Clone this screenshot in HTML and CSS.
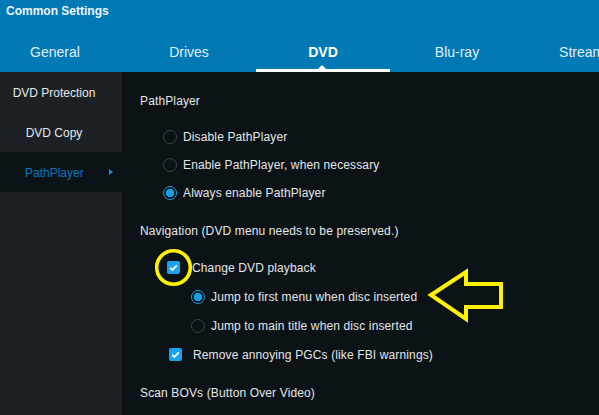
FILE: index.html
```html
<!DOCTYPE html>
<html>
<head>
<meta charset="utf-8">
<link rel="stylesheet" href="styles.css">
</head>
<body>
<div class="app">
  <header class="header">
    <div class="title">Common Settings</div>
    <nav class="tabs">
      <div class="tab">General</div>
      <div class="tab">Drives</div>
      <div class="tab active">DVD</div>
      <div class="tab">Blu-ray</div>
      <div class="tab">Streaming</div>
    </nav>
  </header>
  <div class="body">
    <aside class="sidebar">
      <div class="side-item">DVD Protection</div>
      <div class="side-item">DVD Copy</div>
      <div class="side-item active">PathPlayer<span class="side-arrow"></span></div>
    </aside>
    <main class="content">
      <div class="heading">PathPlayer</div>
      <div class="group">
        <div class="row radio-row"><span class="radio"></span>Disable PathPlayer</div>
        <div class="row radio-row"><span class="radio"></span>Enable PathPlayer, when necessary</div>
        <div class="row radio-row"><span class="radio on"></span>Always enable PathPlayer</div>
      </div>
      <div class="heading">Navigation (DVD menu needs to be preserved.)</div>
      <div class="group">
        <div class="row nrow check-row"><span class="check"><svg width="13" height="13" viewBox="0 0 13 13"><path d="M3.2 6.8 L5.4 9 L9.8 4.3" fill="none" stroke="#fff" stroke-width="1.8"/></svg></span>Change DVD playback</div>
        <div class="row nrow sub-row"><span class="radio on"></span>Jump to first menu when disc inserted</div>
        <div class="row nrow sub-row"><span class="radio"></span>Jump to main title when disc inserted</div>
        <div class="row nrow check-row2"><span class="check"><svg width="13" height="13" viewBox="0 0 13 13"><path d="M3.2 6.8 L5.4 9 L9.8 4.3" fill="none" stroke="#fff" stroke-width="1.8"/></svg></span>Remove annoying PGCs (like FBI warnings)</div>
      </div>
      <div class="heading">Scan BOVs (Button Over Video)</div>
    </main>
  </div>
  <svg class="annot" width="599" height="415" viewBox="0 0 599 415">
    <circle cx="173.5" cy="267.5" r="16.8" fill="none" stroke="#fff200" stroke-width="3.6"/>
    <polygon points="431,295 466,272 466,284 501,284 501,307 466,307 466,319" fill="none" stroke="#fff200" stroke-width="4" stroke-linejoin="miter"/>
  </svg>
</div>
</body>
</html>
```
FILE: styles.css
```css
* { box-sizing: border-box; }
html, body { margin: 0; padding: 0; }
body {
  width: 599px;
  height: 415px;
  overflow: hidden;
  background: #0b1317;
  font-family: "Liberation Sans", Arial, sans-serif;
  font-size: 12px;
  color: #e4e6e8;
}
.app { position: relative; width: 599px; height: 415px; display: flex; flex-direction: column; }
.header {
  background: #0079b5;
  height: 72px;
  display: flex;
  flex-direction: column;
  overflow: hidden;
}
.title {
  font-weight: bold;
  font-size: 12px;
  color: #f2f6fa;
  padding: 4px 0 0 6px;
  height: 30px;
}
.tabs {
  display: flex;
  margin-left: -12px;
  height: 42px;
  white-space: nowrap;
}
.tab {
  flex: 0 0 134px;
  text-align: center;
  font-size: 14px;
  color: #e2eef6;
  padding-top: 14px;
  position: relative;
}
.tab.active {
  font-weight: bold;
  color: #fff;
}
.tab.active::after {
  content: "";
  position: absolute;
  left: 0; right: 0; bottom: 0;
  height: 3px;
  background: #fff;
}
.tab.active::before {
  content: "";
  position: absolute;
  left: 62px;
  bottom: 3px;
  border-left: 4px solid transparent;
  border-right: 4px solid transparent;
  border-bottom: 4px solid #fff;
}
.body { flex: 1; display: flex; }
.sidebar {
  width: 122px;
  background: #1b2125;
  display: flex;
  flex-direction: column;
}
.side-item {
  height: 40px;
  width: 108px;
  display: flex;
  align-items: center;
  justify-content: center;
  padding-top: 2px;
  color: #e6e8ea;
  position: relative;
}
.side-item.active {
  width: 122px;
  background: #0b1317;
  color: #0a78bd;
  justify-content: flex-start;
  padding-left: 25px;
}
.side-arrow {
  position: absolute;
  left: 109px;
  top: 17px;
  border-top: 3.5px solid transparent;
  border-bottom: 3.5px solid transparent;
  border-left: 4px solid #1a8fd8;
}
.content {
  flex: 1;
  padding: 15px 0 0 18px;
  display: flex;
  flex-direction: column;
  letter-spacing: 0.13px;
}
.heading {
  height: 28px;
  display: flex;
  align-items: center;
  margin-bottom: 8px;
}
.group { margin-bottom: 10px; }
.row {
  height: 28px;
  display: flex;
  align-items: center;
  white-space: nowrap;
}
.nrow { height: 29px; }
.radio-row { padding-left: 23px; }
.check-row { padding-left: 27px; }
.sub-row { padding-left: 51px; }
.check-row2 { padding-left: 29px; }
.radio {
  width: 14px;
  height: 14px;
  border-radius: 50%;
  border: 1.5px solid #3b4347;
  margin-right: 6px;
  flex: 0 0 auto;
}
.radio.on {
  border-color: #1a9ee8;
  background: radial-gradient(circle, #1a9ee8 0 4px, #0b1317 4.5px);
}
.check {
  width: 13px;
  height: 13px;
  background: #1ba2ec;
  border-radius: 2px;
  margin-right: 12px;
  flex: 0 0 auto;
  display: flex;
}
.check-row2 .check { margin-right: 11px; }
.annot {
  position: absolute;
  left: 0;
  top: 0;
  pointer-events: none;
}
```
